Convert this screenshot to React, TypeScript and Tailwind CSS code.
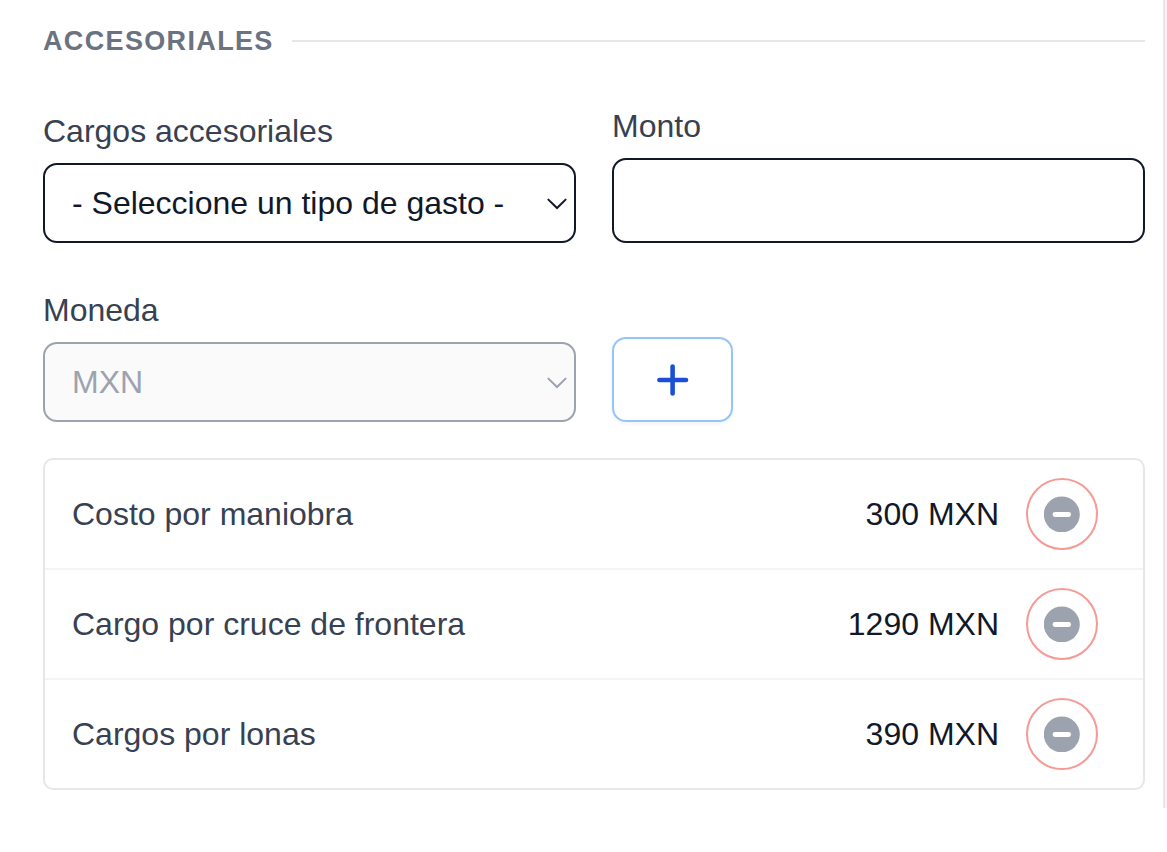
import { useId, useState } from "react";
import type { ReactNode } from "react";

type Charge = { id: number; name: string; amount: number; currency: string };

const initialCharges: Charge[] = [
  { id: 1, name: "Costo por maniobra", amount: 300, currency: "MXN" },
  { id: 2, name: "Cargo por cruce de frontera", amount: 1290, currency: "MXN" },
  { id: 3, name: "Cargos por lonas", amount: 390, currency: "MXN" },
];

function ChevronIcon() {
  return (
    <svg
      className="pointer-events-none absolute top-1/2 right-[9px] h-5 w-5 -translate-y-1/2"
      viewBox="0 0 20 20"
      fill="none"
      stroke="currentColor"
      strokeWidth="2"
      strokeLinecap="round"
      aria-hidden="true"
    >
      <path d="M1.4 6.6l8.6 8.4 8.6-8.4" />
    </svg>
  );
}

function PlusIcon() {
  return (
    <svg
      className="h-8 w-8"
      viewBox="0 0 32 32"
      fill="none"
      stroke="currentColor"
      strokeWidth="4.6"
      strokeLinecap="round"
      aria-hidden="true"
    >
      <path d="M15.6 2.6v26.8M2.4 16h26.6" />
    </svg>
  );
}

function MinusCircleIcon() {
  return (
    <svg className="h-9 w-9" viewBox="0 0 36 36" aria-hidden="true">
      <circle cx="17.8" cy="18.4" r="18" fill="#9ca3af" />
      <rect x="8.6" y="16.1" width="18.4" height="4.8" rx="2.3" fill="#fff" />
    </svg>
  );
}

function SelectField({
  label,
  disabled = false,
  children,
}: {
  label: string;
  disabled?: boolean;
  children: ReactNode;
}) {
  const id = useId();
  return (
    <div className="min-w-0">
      <label htmlFor={id} className="mb-3.5 block leading-9 text-[#374151]">
        {label}
      </label>
      <div className={disabled ? "relative text-[#9ca3af]" : "relative text-[#111827]"}>
        <select
          id={id}
          disabled={disabled}
          className="block h-20 w-full appearance-none rounded-[14px] border-2 border-[#111827] bg-white pr-10 pl-[27px] text-[#111827] disabled:border-[#9ca3af] disabled:bg-[#fafafa] disabled:text-[#9ca3af] disabled:opacity-100"
        >
          {children}
        </select>
        <ChevronIcon />
      </div>
    </div>
  );
}

export default function App() {
  const amountId = useId();
  const [charges, setCharges] = useState(initialCharges);

  return (
    <main className="bg-white font-['Liberation_Sans',Arial,sans-serif] text-[32px] leading-9">
      <div className="flex">
        <section className="min-w-0 flex-1 border-r-2 border-[#e5e7eb] pt-[23px] pr-[18px] pb-[18px] pl-[43px]">
          <div className="flex items-center gap-[18px]">
            <h2 className="text-[27px] leading-9 font-bold tracking-wider text-[#6b7280] uppercase">
              Accesoriales
            </h2>
            <div className="h-0.5 flex-1 bg-[#e5e7eb]" />
          </div>

          <form
            className="mt-[49px] grid grid-cols-2 items-end gap-x-9 gap-y-[49px]"
            onSubmit={(e) => e.preventDefault()}
          >
            <SelectField label="Cargos accesoriales">
              <option>- Seleccione un tipo de gasto -</option>
              <option>Costo por maniobra</option>
              <option>Cargo por cruce de frontera</option>
              <option>Cargos por lonas</option>
            </SelectField>
            <div className="min-w-0">
              <label htmlFor={amountId} className="mb-3.5 block leading-9 text-[#374151]">
                Monto
              </label>
              <input
                id={amountId}
                type="text"
                inputMode="decimal"
                className="block h-[85px] w-full rounded-[14px] border-2 border-[#111827] px-[27px] text-[#111827]"
              />
            </div>
            <SelectField label="Moneda" disabled>
              <option>MXN</option>
            </SelectField>
            <button
              type="submit"
              aria-label="Agregar cargo"
              className="flex h-[85px] w-[121px] items-center justify-center rounded-[14px] border-2 border-[#93c5fd] bg-white text-[#1d4ed8] shadow-[0_2px_4px_rgba(0,0,0,0.05)]"
            >
              <PlusIcon />
            </button>
          </form>

          <ul className="mt-9 divide-y-2 divide-[#f3f4f6] rounded-[10px] border-2 border-[#e5e7eb]">
            {charges.map((charge) => (
              <li key={charge.id} className="flex items-center py-[18px] pr-[45px] pl-[27px]">
                <span className="min-w-0 flex-1 text-[#374151]">{charge.name}</span>
                <span className="text-[#111827]">
                  {charge.amount} {charge.currency}
                </span>
                <button
                  type="button"
                  aria-label={`Quitar ${charge.name}`}
                  onClick={() => setCharges(charges.filter((c) => c.id !== charge.id))}
                  className="ml-[27px] flex h-[72px] w-[72px] items-center justify-center rounded-full border-2 border-[#f59a95]"
                >
                  <MinusCircleIcon />
                </button>
              </li>
            ))}
          </ul>
        </section>
        <div className="w-0.5 bg-[#f3f4f6]" />
      </div>
    </main>
  );
}
